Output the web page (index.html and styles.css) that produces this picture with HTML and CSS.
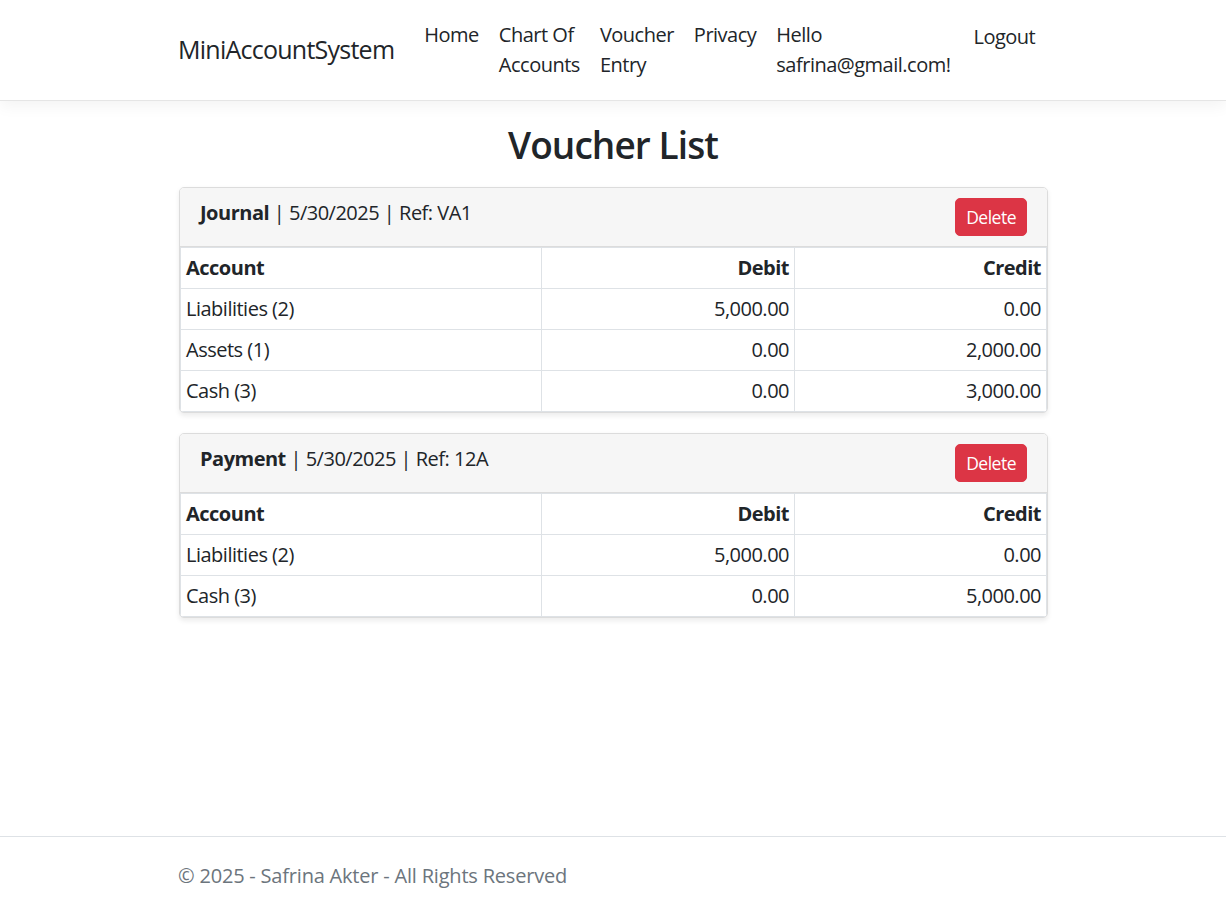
FILE: index.html
```html
<!DOCTYPE html>
<html lang="en">
<head>
<meta charset="utf-8">
<title>Voucher List - MiniAccountSystem</title>
<link rel="stylesheet" href="styles.css">
</head>
<body>
<header class="navbar">
  <div class="container nav-inner">
    <a class="brand" href="#">MiniAccountSystem</a>
    <ul class="nav-list">
      <li><a class="nav-link" href="#">Home</a></li>
      <li><a class="nav-link" href="#">Chart Of<br>Accounts</a></li>
      <li><a class="nav-link" href="#">Voucher<br>Entry</a></li>
      <li><a class="nav-link" href="#">Privacy</a></li>
      <li><a class="nav-link" href="#">Hello<br>safrina@gmail.com!</a></li>
      <li><button class="nav-btn" type="button">Logout</button></li>
    </ul>
  </div>
</header>

<main class="container main">
  <h2 class="page-title">Voucher List</h2>

  <section class="card">
    <div class="card-header">
      <div class="card-title"><strong>Journal</strong> | 5/30/2025 | Ref: VA1</div>
      <button class="btn-danger" type="button">Delete</button>
    </div>
    <table class="table">
      <colgroup><col class="col-account"><col class="col-debit"><col></colgroup>
      <thead>
        <tr><th>Account</th><th class="num">Debit</th><th class="num">Credit</th></tr>
      </thead>
      <tbody>
        <tr><td>Liabilities (2)</td><td class="num">5,000.00</td><td class="num">0.00</td></tr>
        <tr><td>Assets (1)</td><td class="num">0.00</td><td class="num">2,000.00</td></tr>
        <tr><td>Cash (3)</td><td class="num">0.00</td><td class="num">3,000.00</td></tr>
      </tbody>
    </table>
  </section>

  <section class="card">
    <div class="card-header">
      <div class="card-title"><strong>Payment</strong> | 5/30/2025 | Ref: 12A</div>
      <button class="btn-danger" type="button">Delete</button>
    </div>
    <table class="table">
      <colgroup><col class="col-account"><col class="col-debit"><col></colgroup>
      <thead>
        <tr><th>Account</th><th class="num">Debit</th><th class="num">Credit</th></tr>
      </thead>
      <tbody>
        <tr><td>Liabilities (2)</td><td class="num">5,000.00</td><td class="num">0.00</td></tr>
        <tr><td>Cash (3)</td><td class="num">0.00</td><td class="num">5,000.00</td></tr>
      </tbody>
    </table>
  </section>
</main>

<footer class="footer">
  <div class="container">© 2025 - Safrina Akter - All Rights Reserved</div>
</footer>
</body>
</html>
```

FILE: styles.css
```css
* { box-sizing: border-box; }

html, body { height: 100%; }

body {
  margin: 0;
  min-height: 100vh;
  display: flex;
  flex-direction: column;
  font-family: "Open Sans", "Noto Sans", "Liberation Sans", sans-serif;
  font-size: 20px;
  line-height: 30px;
  letter-spacing: -0.025em;
  color: #212529;
  background: #fff;
}

a { color: inherit; text-decoration: none; }

.container {
  width: 900px;
  margin: 0 auto;
  padding: 0 15px;
}

/* navbar */
.navbar {
  padding: 10px 0;
  border-bottom: 1px solid #e5e5e5;
  box-shadow: 0 5px 15px rgba(0, 0, 0, 0.05);
  margin-bottom: 20px;
}

.nav-inner {
  display: flex;
  align-items: center;
}

.brand {
  font-size: 25px;
  line-height: 37.5px;
  letter-spacing: -0.03em;
  padding: 6px 0;
  margin-right: 20px;
  white-space: nowrap;
}

.nav-list {
  display: flex;
  list-style: none;
  margin: 0;
  padding: 0;
  flex: 1;
}

.nav-link {
  display: block;
  padding: 10px;
  white-space: nowrap;
}

.nav-btn {
  font: inherit;
  letter-spacing: inherit;
  color: #212529;
  background: none;
  border: 1px solid transparent;
  padding: 10.5px 10px 7.5px 12px;
  line-height: 30px;
  cursor: pointer;
}

/* main */
.main {
  flex: 1;
  padding-bottom: 20px;
}

.page-title {
  text-align: center;
  font-size: 37px;
  font-weight: 600;
  letter-spacing: -0.025em;
  line-height: 48px;
  margin: 0 0 18px;
}

.card {
  border: 1px solid #dcdcdc;
  border-radius: 5px;
  box-shadow: 0 2.5px 5px rgba(0, 0, 0, 0.075);
  margin: 0 0 20px 1px;
  overflow: hidden;
  background: #fff;
}

.card-header {
  display: flex;
  justify-content: space-between;
  padding: 10px 20px;
  background: #f6f6f6;
  border-bottom: 1px solid #dcdcdc;
}

.card-title strong { font-weight: 700; }

.btn-danger {
  font: inherit;
  letter-spacing: inherit;
  font-size: 17.5px;
  line-height: 26px;
  padding: 5px 10px;
  color: #fff;
  background: #dc3545;
  border: 1px solid #dc3545;
  border-radius: 5px;
  cursor: pointer;
}

.table {
  width: 100%;
  border-collapse: collapse;
  table-layout: fixed;
}

.col-account { width: 361px; }
.col-debit { width: 253px; }

.table th,
.table td {
  border: 1px solid #dee2e6;
  padding: 5px;
  text-align: left;
  font-weight: 400;
}

.table th { font-weight: 700; }

.table .num { text-align: right; }

/* footer */
.footer {
  border-top: 1px solid #dee2e6;
  color: #6c757d;
  padding-top: 3px;
  line-height: 71px;
  letter-spacing: -0.01em;
  white-space: nowrap;
}
```
